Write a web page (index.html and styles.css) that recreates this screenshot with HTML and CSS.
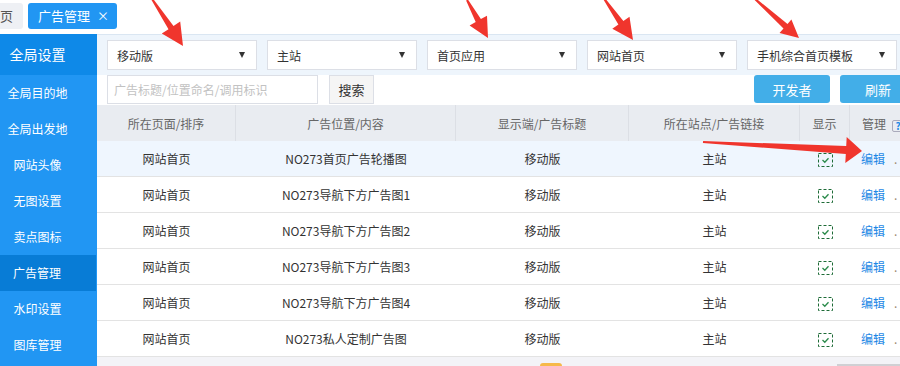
FILE: index.html
```html
<!DOCTYPE html>
<html lang="zh">
<head>
<meta charset="utf-8">
<title>广告管理</title>
<link rel="stylesheet" href="styles.css">
</head>
<body>
<div class="tabbar">
  <div class="tab tab-home">首页</div>
  <div class="tab tab-active">广告管理<span class="close">×</span></div>
</div>
<div class="layout">
  <aside class="sidebar">
    <div class="side-head">全局设置</div>
    <div class="side-item">全局目的地</div>
    <div class="side-item">全局出发地</div>
    <div class="side-item">网站头像</div>
    <div class="side-item">无图设置</div>
    <div class="side-item">卖点图标</div>
    <div class="side-item active">广告管理</div>
    <div class="side-item">水印设置</div>
    <div class="side-item">图库管理</div>
  </aside>
  <main class="main">
    <div class="filters">
      <div class="select"><span>移动版</span><i class="caret"></i></div>
      <div class="select"><span>主站</span><i class="caret"></i></div>
      <div class="select"><span>首页应用</span><i class="caret"></i></div>
      <div class="select"><span>网站首页</span><i class="caret"></i></div>
      <div class="select"><span>手机综合首页模板</span><i class="caret"></i></div>
    </div>
    <div class="searchbar">
      <input class="search-input" type="text" placeholder="广告标题/位置命名/调用标识">
      <button class="search-btn">搜索</button>
      <div class="actions">
        <button class="btn-blue">开发者</button>
        <button class="btn-blue">刷新</button>
      </div>
    </div>
    <table class="grid">
      <colgroup>
        <col class="c1"><col class="c2"><col class="c3"><col class="c4"><col class="c5"><col class="c6">
      </colgroup>
      <thead>
        <tr>
          <th>所在页面/排序</th>
          <th>广告位置/内容</th>
          <th>显示端/广告标题</th>
          <th>所在站点/广告链接</th>
          <th>显示</th>
          <th class="manage">管理<span class="help">?</span></th>
        </tr>
      </thead>
      <tbody>
        <tr class="hover">
          <td>网站首页</td><td>NO273首页广告轮播图</td><td>移动版</td><td>主站</td>
          <td><svg class="check" width="16" height="15" viewBox="0 0 16 15"><rect x="0.5" y="0.5" width="14" height="13" fill="none" stroke="#1d6b36" stroke-dasharray="3 2"/><polyline points="4.5,7 6.8,9.2 10.5,5.2" fill="none" stroke="#2a8a4a" stroke-width="1.3"/></svg></td>
          <td class="ops"><a class="link">编辑</a><span class="dot">.</span></td>
        </tr>
        <tr>
          <td>网站首页</td><td>NO273导航下方广告图1</td><td>移动版</td><td>主站</td>
          <td><svg class="check" width="16" height="15" viewBox="0 0 16 15"><rect x="0.5" y="0.5" width="14" height="13" fill="none" stroke="#1d6b36" stroke-dasharray="3 2"/><polyline points="4.5,7 6.8,9.2 10.5,5.2" fill="none" stroke="#2a8a4a" stroke-width="1.3"/></svg></td>
          <td class="ops"><a class="link">编辑</a><span class="dot">.</span></td>
        </tr>
        <tr>
          <td>网站首页</td><td>NO273导航下方广告图2</td><td>移动版</td><td>主站</td>
          <td><svg class="check" width="16" height="15" viewBox="0 0 16 15"><rect x="0.5" y="0.5" width="14" height="13" fill="none" stroke="#1d6b36" stroke-dasharray="3 2"/><polyline points="4.5,7 6.8,9.2 10.5,5.2" fill="none" stroke="#2a8a4a" stroke-width="1.3"/></svg></td>
          <td class="ops"><a class="link">编辑</a><span class="dot">.</span></td>
        </tr>
        <tr>
          <td>网站首页</td><td>NO273导航下方广告图3</td><td>移动版</td><td>主站</td>
          <td><svg class="check" width="16" height="15" viewBox="0 0 16 15"><rect x="0.5" y="0.5" width="14" height="13" fill="none" stroke="#1d6b36" stroke-dasharray="3 2"/><polyline points="4.5,7 6.8,9.2 10.5,5.2" fill="none" stroke="#2a8a4a" stroke-width="1.3"/></svg></td>
          <td class="ops"><a class="link">编辑</a><span class="dot">.</span></td>
        </tr>
        <tr>
          <td>网站首页</td><td>NO273导航下方广告图4</td><td>移动版</td><td>主站</td>
          <td><svg class="check" width="16" height="15" viewBox="0 0 16 15"><rect x="0.5" y="0.5" width="14" height="13" fill="none" stroke="#1d6b36" stroke-dasharray="3 2"/><polyline points="4.5,7 6.8,9.2 10.5,5.2" fill="none" stroke="#2a8a4a" stroke-width="1.3"/></svg></td>
          <td class="ops"><a class="link">编辑</a><span class="dot">.</span></td>
        </tr>
        <tr>
          <td>网站首页</td><td>NO273私人定制广告图</td><td>移动版</td><td>主站</td>
          <td><svg class="check" width="16" height="15" viewBox="0 0 16 15"><rect x="0.5" y="0.5" width="14" height="13" fill="none" stroke="#1d6b36" stroke-dasharray="3 2"/><polyline points="4.5,7 6.8,9.2 10.5,5.2" fill="none" stroke="#2a8a4a" stroke-width="1.3"/></svg></td>
          <td class="ops"><a class="link">编辑</a><span class="dot">.</span></td>
        </tr>
      </tbody>
    </table>
    <div class="footer">
      <span class="page-orange"></span>
      <span class="page-gray"></span>
    </div>
  </main>
</div>
<svg class="arrows" width="900" height="366" viewBox="0 0 900 366">
  <polygon points="151.2,-0.5 168.5,29.2 161.8,33.6 183,46 180.2,21.6 173.5,26.0 152.8,-1.6"/>
  <polygon points="466.1,0.5 475.7,22.0 469.6,25.4 488,38 487.0,15.7 480.9,19.0 467.9,-0.5"/>
  <polygon points="603.2,-0.9 618.4,24.5 612.3,28.8 633,40 629.5,16.8 623.4,21.1 604.8,-2.1"/>
  <polygon points="754.3,-0.3 783.5,28.4 779.5,32.9 799,38 791.4,19.4 787.5,23.9 755.7,-1.8"/>
  <polygon points="702.9,143.0 845.8,154.1 845.3,163.1 862,151 846.7,137.1 846.2,146.1 703.1,141.0"/>
</svg>
</body>
</html>
```
FILE: styles.css
```css
* { box-sizing: border-box; }
html, body {
  margin: 0;
  height: 366px;
  overflow: hidden;
  background: #fff;
  font-family: "Noto Sans CJK SC", "Noto Sans", sans-serif;
  color: #333;
}
body { position: relative; }

.tabbar {
  height: 34px;
  display: flex;
  align-items: flex-start;
  gap: 5px;
  padding-top: 3px;
  margin-left: -23px;
}
.tab {
  height: 26px;
  line-height: 26px;
  font-size: 13px;
  padding: 0 10px;
  border-radius: 3px;
}
.tab-home { background: #eef0f4; color: #555; }
.tab-active {
  background: #2196f3;
  color: #fff;
  padding-right: 8px;
  display: flex;
  gap: 7px;
}
.close { font-size: 12px; }

.layout { display: flex; height: 332px; }

.sidebar {
  width: 97px;
  flex: none;
  background: #2196f3;
  color: #fff;
}
.side-head {
  height: 41px;
  line-height: 41px;
  background: #0e89e8;
  font-size: 14px;
  text-align: center;
  padding-right: 22px;
}
.side-item {
  height: 36px;
  line-height: 36px;
  font-size: 12px;
  text-align: center;
  padding-right: 22px;
}
.side-item.active { background: #087cd6; margin-right: 1px; }

.main {
  flex: 1;
  min-width: 0;
  overflow: hidden;
  display: flex;
  flex-direction: column;
}

.filters {
  height: 41px;
  border-top: 1px solid #dae6f2;
  background: #eef5fc;
  padding: 5px 10px;
  display: flex;
  gap: 10px;
}
.select {
  width: 150px;
  height: 30px;
  flex: none;
  background: #fff;
  border: 1px solid #dcdfe6;
  display: flex;
  align-items: center;
  justify-content: space-between;
  padding: 0 11px 0 9px;
  font-size: 12px;
  color: #333;
}
.caret {
  width: 0;
  height: 0;
  border-left: 3.5px solid transparent;
  border-right: 3.5px solid transparent;
  border-top: 6px solid #333;
}

.searchbar {
  height: 30px;
  flex: none;
  display: flex;
  align-items: flex-start;
  padding-left: 10px;
}
.search-input {
  width: 211px;
  height: 29px;
  border: 1px solid #dcdfe6;
  padding: 0 6px;
  font-family: inherit;
  font-size: 12px;
  color: #333;
  outline: none;
}
.search-input::placeholder { color: #c2c2c2; }
.search-btn {
  margin-left: 11px;
  width: 45px;
  height: 29px;
  background: #f5f5f5;
  border: 1px solid #dcdfe6;
  font-family: inherit;
  font-size: 13px;
  color: #333;
  padding: 0;
}
.actions {
  margin-left: auto;
  margin-right: -16px;
  display: flex;
  gap: 10px;
}
.btn-blue {
  width: 76px;
  height: 28px;
  border: none;
  border-radius: 3px;
  background: #42aee8;
  color: #fff;
  font-family: inherit;
  font-size: 13px;
  padding: 0;
}

.grid {
  width: 853px;
  table-layout: fixed;
  border-collapse: separate;
  border-spacing: 0;
  font-size: 12px;
  flex: none;
}
.c1 { width: 139px; }
.c2 { width: 220px; }
.c3 { width: 173px; }
.c4 { width: 171px; }
.c5 { width: 50px; }
.c6 { width: 100px; }

.grid th {
  height: 36px;
  background: #e9ecf1;
  color: #666;
  font-weight: normal;
  border-right: 1px solid #dcdfe5;
  padding: 0;
  text-align: center;
}
.grid th:last-child { border-right: none; }
.grid th.manage { text-align: left; padding-left: 12px; }
.help {
  display: inline-block;
  width: 12px;
  height: 12px;
  margin-left: 6px;
  border: 1px solid #aab;
  border-radius: 2px;
  color: #1e88e5;
  font-size: 10px;
  font-weight: bold;
  line-height: 10px;
  text-align: center;
  vertical-align: -1px;
}
.grid td {
  height: 36px;
  padding: 0;
  text-align: center;
  vertical-align: middle;
  border-bottom: 1px solid #e3e3e3;
  white-space: nowrap;
}
.grid tr.hover td { background: #eff6fe; }
.check { display: inline-block; vertical-align: middle; margin-left: 2px; }
.grid td.ops { text-align: left; padding-left: 11px; }
.link { color: #1e88e5; }
.dot { color: #a08a70; margin-left: 9px; }

.footer {
  flex: 1;
  background: #f3f3f7;
  display: flex;
  align-items: flex-start;
}
.page-orange {
  margin-left: 443px;
  margin-top: 6px;
  width: 25px;
  height: 4px;
  background: #f6b94a;
  border-radius: 3px 3px 0 0;
}
.page-gray {
  margin-left: 275px;
  margin-top: 7px;
  width: 70px;
  height: 3px;
  background: #d0d0d4;
}

.arrows {
  position: absolute;
  left: 0;
  top: 0;
  pointer-events: none;
  fill: #f0352d;
}
```
